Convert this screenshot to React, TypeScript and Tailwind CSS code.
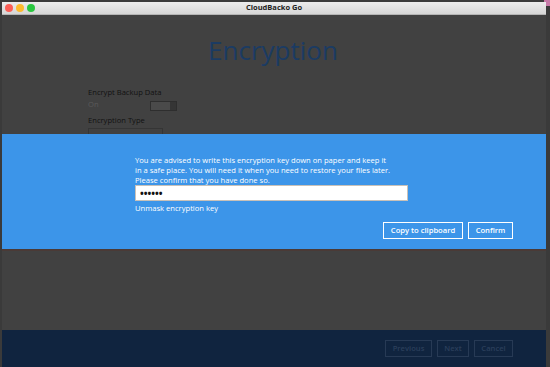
import React from "react";

export default function App() {
  return (
    <div
      className="w-[550px] h-[367px] bg-[#3a3a3a] overflow-hidden relative"
      style={{ fontFamily: '"Open Sans", "DejaVu Sans", sans-serif' }}
    >
      <div className="absolute right-0 top-0 w-[6px] h-[6px] bg-[#c77aa8]" />
      <div className="ml-[2px] mt-[2px] w-[544px] h-[365px] flex flex-col bg-[#414141]">
        {/* Title bar */}
        <div className="h-[13px] bg-gradient-to-b from-[#ececec] to-[#d6d6d6] border-b border-[#b5b5b5] flex items-center relative shrink-0">
          <div className="flex gap-[3px] ml-[3px]">
            <span className="w-[8px] h-[8px] rounded-full bg-[#fc5f57]" />
            <span className="w-[8px] h-[8px] rounded-full bg-[#fdbb2e]" />
            <span className="w-[8px] h-[8px] rounded-full bg-[#29c73f]" />
          </div>
          <div className="absolute inset-0 flex items-center justify-center text-[7.5px] font-bold text-[#222]">
            CloudBacko Go
          </div>
        </div>

        {/* Content */}
        <div className="flex flex-col flex-1">
          <div className="h-[119px] flex flex-col shrink-0">
            <div className="text-center text-[26px] font-medium leading-none text-[#1b3b63] mt-[22px] pr-[2px]">
              Encryption
            </div>
            <div className="ml-[86px] mt-[24px] flex flex-col text-[7.6px] font-medium text-[#111]">
              <div className="leading-[11px]">Encrypt Backup Data</div>
              <div className="flex items-center h-[14px]">
                <span className="text-[#5a5a5a] w-[62px]">On</span>
                <span className="w-[27px] h-[10px] mt-[2px] border border-[#2e2e2e] bg-[#4a4a4a] flex justify-end">
                  <span className="w-[6px] h-full bg-[#353535]" />
                </span>
              </div>
              <div className="leading-[11px] mt-[3px]">Encryption Type</div>
              <div className="w-[75px] h-[8px] border border-[#353535] border-b-0 mt-[1.5px]" />
            </div>
          </div>

          {/* Blue band */}
          <div className="h-[117px] bg-[#3c95e9] shrink-0 border-b-[2px] border-[#4a3a36] flex flex-col">
            <div className="ml-[133px] mt-[21px] w-[290px] text-[7.6px] font-medium leading-[10px] text-white">
              <p>You are advised to write this encryption key down on paper and keep it</p>
              <p>in a safe place. You will need it when you need to restore your files later.</p>
              <p>Please confirm that you have done so.</p>
              <div className="mt-0 w-[273px] h-[16px] bg-white border border-[#c9c1b8] flex items-center px-[4px] text-[#111] text-[10px] font-bold">
                ••••••
              </div>
              <p className="mt-[2px]">Unmask encryption key</p>
            </div>
            <div className="flex justify-end gap-[5px] mr-[33px] mt-[9px]">
              <button className="h-[17px] w-[80px] border-[1.5px] border-white text-white text-[7.6px] font-semibold flex items-center justify-center">
                Copy to clipboard
              </button>
              <button className="h-[17px] w-[45px] border-[1.5px] border-white text-white text-[7.6px] font-semibold flex items-center justify-center">
                Confirm
              </button>
            </div>
          </div>

          <div className="flex-1" />

          {/* Footer */}
          <div className="h-[37px] bg-[#10243f] flex items-center justify-end gap-[5px] pr-[33px] shrink-0">
            <button className="h-[17px] w-[47px] border border-[#273a55] text-[#2b3f5b] text-[7.6px] font-semibold flex items-center justify-center">
              Previous
            </button>
            <button className="h-[17px] w-[32px] border border-[#273a55] text-[#2b3f5b] text-[7.6px] font-semibold flex items-center justify-center">
              Next
            </button>
            <button className="h-[17px] w-[39px] border border-[#273a55] text-[#2b3f5b] text-[7.6px] font-semibold flex items-center justify-center">
              Cancel
            </button>
          </div>
        </div>
      </div>
    </div>
  );
}
